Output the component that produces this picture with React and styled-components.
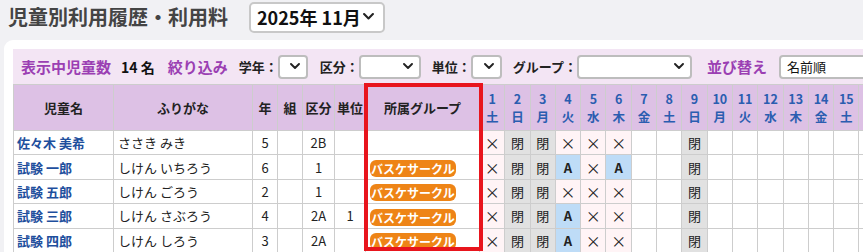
import React from "react";
import styled, { createGlobalStyle } from "styled-components";

const Global = createGlobalStyle`
  html, body { margin: 0; padding: 0; }
  body {
    background: #f1f1f4;
    font-family: "Noto Sans CJK JP", "Noto Sans", sans-serif;
    color: #222;
    overflow: hidden;
    width: 863px;
    height: 252px;
  }
`;

const Page = styled.div`
  width: 863px;
  overflow: hidden;
`;

const TopBar = styled.div`
  display: flex;
  align-items: center;
  height: 34px;
  padding-left: 8px;
  gap: 21px;
`;

const Title = styled.h1`
  margin: 0;
  font-size: 20px;
  font-weight: 700;
  color: #444;
  line-height: 1;
  white-space: nowrap;
`;

const SelectBox = styled.div`
  display: flex;
  align-items: center;
  box-sizing: border-box;
  width: ${(p) => p.$w}px;
  height: ${(p) => p.$h || 24}px;
  background: #fff;
  border: 2px solid ${(p) => (p.$big ? "#c8c8c8" : "#bdbdbd")};
  border-radius: ${(p) => (p.$big ? 5 : 4)}px;
  padding: 0 ${(p) => (p.$big ? 9 : 6)}px 0 6px;
  font-size: ${(p) => (p.$big ? 18 : 13)}px;
  font-weight: ${(p) => (p.$big ? 700 : 400)};
  color: #111;
  flex-shrink: 0;
  white-space: nowrap;
  overflow: hidden;
  svg { margin-left: auto; flex-shrink: 0; }
`;

const Chevron = ({ size = 10 }) => (
  <svg width={size} height={size * 0.65} viewBox="0 0 10 6.5">
    <polyline points="1,1 5,5 9,1" fill="none" stroke="#222" strokeWidth="1.9" strokeLinecap="round" strokeLinejoin="round" />
  </svg>
);

const Card = styled.div`
  margin: 6px 0 0 4px;
  width: 900px;
  background: #fff;
  border-radius: 9px 0 0 0;
  padding: 9px 0 0 9px;
  box-sizing: border-box;
  height: 220px;
`;

const FilterBar = styled.div`
  display: flex;
  align-items: center;
  height: 35px;
  background: #f3e5f4;
  padding-left: 8px;
  white-space: nowrap;
`;

const PurpleLabel = styled.span`
  color: #9b3fb3;
  font-weight: 700;
  font-size: 15px;
  margin-right: ${(p) => p.$mr || 0}px;
`;

const Count = styled.span`
  font-weight: 700;
  font-size: 14px;
  color: #111;
  margin-right: 13px;
`;

const FieldLabel = styled.span`
  font-weight: 700;
  font-size: 13px;
  color: #222;
`;

const Field = styled.div`
  display: flex;
  align-items: center;
  margin-right: ${(p) => p.$mr || 11}px;
`;

const TableWrap = styled.div`
  position: relative;
`;

const Table = styled.table`
  border-collapse: collapse;
  table-layout: fixed;
  font-size: 13px;
  width: ${(p) => p.$w}px;
  th, td {
    border: 1px solid #cdcdcd;
    padding: 0;
    white-space: nowrap;
    overflow: hidden;
  }
`;

const HeadCell = styled.th`
  background: #ddc1e5;
  height: 45px;
  font-weight: 700;
  font-size: 13px;
  color: #222;
  text-align: center;
`;

const DayHead = styled.th`
  background: #ddc1e5;
  font-weight: 700;
  font-size: 12.5px;
  color: #2a5db0;
  text-align: center;
  line-height: 18px;
  padding-top: 1px !important;
`;

const Row = styled.tr`
  height: 24.4px;
`;

const Cell = styled.td`
  text-align: ${(p) => p.$align || "center"};
  padding-left: ${(p) => p.$pl || 0}px !important;
  color: #222;
  background: #fff;
`;

const NameLink = styled.a`
  color: #1e4f9d;
  font-weight: 700;
  text-decoration: none;
`;

const DayCell = styled.td`
  text-align: center;
  background: ${(p) =>
    p.$kind === "x" ? "#fff4f6" : p.$kind === "closed" ? "#e1e1e1" : p.$kind === "a" ? "#bedcf7" : "#fff"};
  font-weight: ${(p) => (p.$kind === "a" ? 700 : 400)};
  color: #222;
  font-size: ${(p) => (p.$kind === "x" ? 15 : 13)}px;
`;

const Badge = styled.span`
  display: inline-block;
  background: #ee8416;
  color: #fff;
  font-weight: 700;
  font-size: 12px;
  line-height: 17px;
  padding: 0 1px;
  border-radius: 6px;
  margin-left: 4px;
  vertical-align: middle;
`;

const Highlight = styled.div`
  position: absolute;
  left: 351px;
  top: -1px;
  width: 119px;
  height: 168px;
  border: 4px solid #e8151d;
  box-sizing: border-box;
  pointer-events: none;
`;

const weekdays = ["土", "日", "月", "火", "水", "木", "金"];
const days = Array.from({ length: 15 }, (_, i) => ({ d: i + 1, w: weekdays[i % 7] }));

const children = [
  { name: "佐々木 美希", kana: "ささき みき", grade: "5", kubun: "2B", unit: "", group: false, a: [] },
  { name: "試験 一郎", kana: "しけん いちろう", grade: "6", kubun: "1", unit: "", group: true, a: [4, 6] },
  { name: "試験 五郎", kana: "しけん ごろう", grade: "2", kubun: "1", unit: "", group: true, a: [] },
  { name: "試験 三郎", kana: "しけん さぶろう", grade: "4", kubun: "2A", unit: "1", group: true, a: [4] },
  { name: "試験 四郎", kana: "しけん しろう", grade: "3", kubun: "2A", unit: "", group: true, a: [4] },
];

const kindFor = (d, aList) => {
  if (d === 2 || d === 3 || d === 9) return "closed";
  if (d >= 1 && d <= 6) return aList.includes(d) ? "a" : "x";
  return "";
};

const colWidths = [100, 139, 25, 25, 32, 31, 114];
const dayW = 25.3;
const tableW = colWidths.reduce((a, b) => a + b, 0) + (days.length + 1) * dayW;

export default function App() {
  return (
    <Page>
      <Global />
      <TopBar>
        <Title>児童別利用履歴・利用料</Title>
        <SelectBox $big $w={136} $h={31}>
          2025年 11月
          <Chevron size={11} />
        </SelectBox>
      </TopBar>
      <Card>
        <FilterBar>
          <PurpleLabel $mr={10}>表示中児童数</PurpleLabel>
          <Count>14 名</Count>
          <PurpleLabel $mr={11}>絞り込み</PurpleLabel>
          <Field $mr={12}>
            <FieldLabel>学年：</FieldLabel>
            <SelectBox $w={30}><Chevron /></SelectBox>
          </Field>
          <Field>
            <FieldLabel>区分：</FieldLabel>
            <SelectBox $w={62}><Chevron /></SelectBox>
          </Field>
          <Field>
            <FieldLabel>単位：</FieldLabel>
            <SelectBox $w={31}><Chevron /></SelectBox>
          </Field>
          <Field $mr={15}>
            <FieldLabel>グループ：</FieldLabel>
            <SelectBox $w={115}><Chevron /></SelectBox>
          </Field>
          <PurpleLabel $mr={12}>並び替え</PurpleLabel>
          <SelectBox $w={120}>名前順</SelectBox>
        </FilterBar>
        <TableWrap>
          <Table $w={tableW}>
            <colgroup>
              {colWidths.map((w, i) => (
                <col key={i} style={{ width: w }} />
              ))}
              {days.map((d) => (
                <col key={"d" + d.d} style={{ width: dayW }} />
              ))}
              <col style={{ width: dayW }} />
            </colgroup>
            <thead>
              <tr>
                <HeadCell>児童名</HeadCell>
                <HeadCell>ふりがな</HeadCell>
                <HeadCell>年</HeadCell>
                <HeadCell>組</HeadCell>
                <HeadCell>区分</HeadCell>
                <HeadCell>単位</HeadCell>
                <HeadCell>所属グループ</HeadCell>
                {days.map((d) => (
                  <DayHead key={d.d}>
                    {d.d}
                    <br />
                    {d.w}
                  </DayHead>
                ))}
                <DayHead />
              </tr>
            </thead>
            <tbody>
              {children.map((c) => (
                <Row key={c.name}>
                  <Cell $align="left" $pl={3}>
                    <NameLink href="#">{c.name}</NameLink>
                  </Cell>
                  <Cell $align="left" $pl={4}>{c.kana}</Cell>
                  <Cell>{c.grade}</Cell>
                  <Cell></Cell>
                  <Cell>{c.kubun}</Cell>
                  <Cell>{c.unit}</Cell>
                  <Cell $align="left">{c.group && <Badge>バスケサークル</Badge>}</Cell>
                  {days.map((d) => {
                    const k = kindFor(d.d, c.a);
                    return (
                      <DayCell key={d.d} $kind={k}>
                        {k === "x" ? "×" : k === "closed" ? "閉" : k === "a" ? "A" : ""}
                      </DayCell>
                    );
                  })}
                  <DayCell />
                </Row>
              ))}
            </tbody>
          </Table>
          <Highlight />
        </TableWrap>
      </Card>
    </Page>
  );
}
